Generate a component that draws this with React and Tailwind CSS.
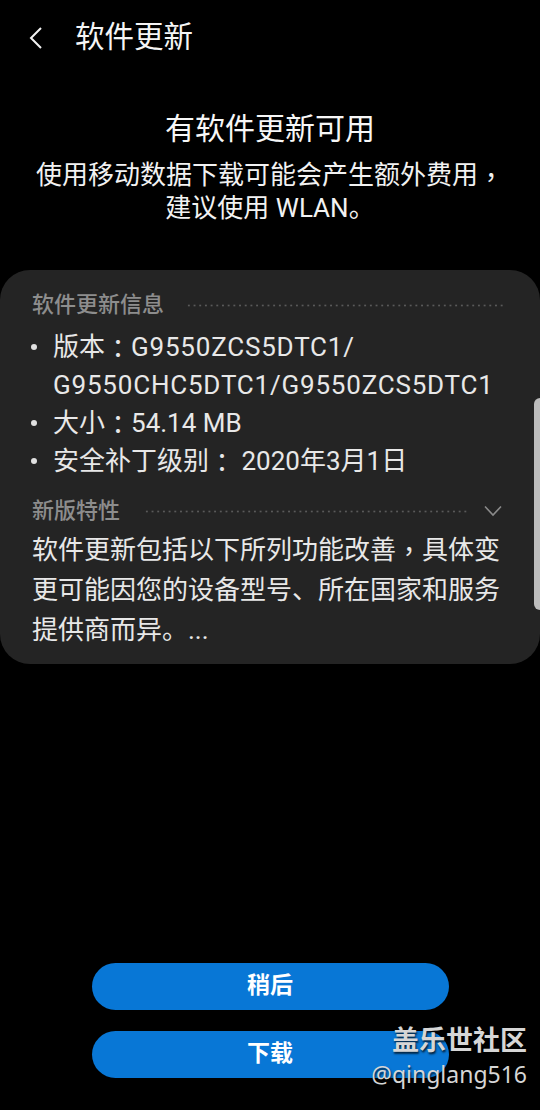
import React from "react";

const dots =
  "h-[3px] flex-1 bg-[radial-gradient(circle,#5a5a5a_0.9px,transparent_1.2px)] bg-[length:5.7px_3px] bg-repeat-x";

// centred full-width punctuation, like the phone's font
const P = ({ children }) => <span className="font-['Noto_Sans_CJK_TC',sans-serif] align-top">{children}</span>;

function SectionHead({ title, chevron }) {
  return (
    <div className="flex items-center h-[30px]">
      <span className="text-[22px] leading-[30px] font-medium text-[#8d8d8d]">{title}</span>
      <div className={`${dots} ${chevron ? "ml-[24px]" : "ml-[22px]"}`} />
      {chevron && (
        <svg width="18" height="12" viewBox="0 0 18 12" className="ml-[17px] mr-[4px]">
          <polyline points="1,1.5 9,10 17,1.5" fill="none" stroke="#8a8a8a" strokeWidth="1.6" />
        </svg>
      )}
    </div>
  );
}

function Bullet({ children }) {
  return (
    <div className="flex">
      <span className="w-[21px] shrink-0 flex items-center h-[38px]">
        <span className="w-[6px] h-[6px] rounded-full bg-[#e0e0e0] -ml-[1px]" />
      </span>
      <span>{children}</span>
    </div>
  );
}

export default function App() {
  return (
    <div className="relative h-[1110px] bg-black flex flex-col font-['Roboto','Noto_Sans_CJK_SC',sans-serif] text-white overflow-hidden">
      {/* top bar */}
      <div className="h-[76px] flex items-center">
        <svg width="14" height="24" viewBox="0 0 14 24" className="ml-[29px]">
          <polyline points="12,2 2,12 12,22" fill="none" stroke="#f2f2f2" strokeWidth="2" />
        </svg>
        <span className="ml-[32px] text-[29.5px] leading-none text-[#f5f5f5]">软件更新</span>
      </div>

      {/* heading */}
      <div className="mt-[33px] text-center">
        <div className="text-[30px] leading-[40px] text-[#f7f7f7]">有软件更新可用</div>
        <p className="mt-[10px] text-[26px] leading-[33px] text-[#f2f2f2]">
          使用移动数据下载可能会产生额外费用<P>，</P>
          <br />
          建议使用 WLAN。
        </p>
      </div>

      {/* info card */}
      <div className="mt-[45px] bg-[#242424] rounded-[30px] pl-8 pr-[34px] pt-[20px] pb-[14px]">
        <SectionHead title="软件更新信息" />
        <div className="mt-[8px] text-[26px] leading-[38px] text-[#e8e8e8]">
          <Bullet>
            版本<P>：</P>
            <span className="tracking-[0.8px]">G9550ZCS5DTC1/</span>
            <br />
            <span className="tracking-[0.8px]">G9550CHC5DTC1/G9550ZCS5DTC1</span>
          </Bullet>
          <Bullet>
            大小<P>：</P>54.14 MB
          </Bullet>
          <Bullet>
            安全补丁级别<P>：</P> 2020年3月1日
          </Bullet>
        </div>
        <div className="mt-4">
          <SectionHead title="新版特性" chevron />
        </div>
        <p className="mt-[4px] text-[26px] leading-[40px] text-[#e8e8e8] whitespace-nowrap">
          软件更新包括以下所列功能改善<P>，</P>具体变
          <br />
          更可能因您的设备型号、所在国家和服务
          <br />
          提供商而异。...
        </p>
      </div>

      {/* buttons */}
      <div className="mt-auto pb-[32px] flex flex-col items-center gap-[21px]">
        <button className="w-[357px] h-[47px] rounded-full bg-[#0877d6] text-[23px] font-bold text-white">
          稍后
        </button>
        <button className="w-[357px] h-[47px] rounded-full bg-[#0877d6] text-[23px] font-bold text-white">
          下载
        </button>
      </div>

      {/* scrollbar */}
      <div className="absolute right-0 top-[398px] w-[6px] h-[212px] rounded-l-full bg-[#bdbdbd]" />

      {/* watermark */}
      <div className="absolute right-[13px] top-[1021px] flex flex-col items-end font-['Noto_Sans','Noto_Sans_CJK_SC',sans-serif] text-[#d6d6d6] [text-shadow:1px_2px_2px_rgba(0,0,0,0.7)]">
        <span className="text-[27px] leading-[38px] font-bold">盖乐世社区</span>
        <span className="text-[23px] leading-[30px]">@qinglang516</span>
      </div>
    </div>
  );
}
